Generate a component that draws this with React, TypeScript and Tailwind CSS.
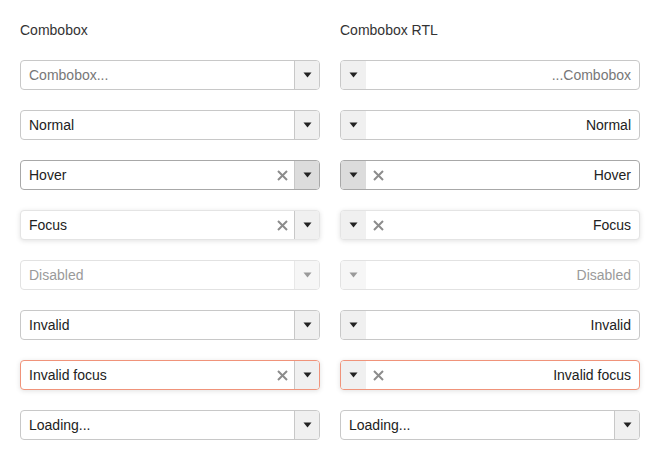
import React from "react";

type State = "placeholder" | "normal" | "hover" | "focus" | "disabled" | "invalid" | "invalidFocus" | "loading";

const rows: { state: State; label: string }[] = [
  { state: "placeholder", label: "Combobox..." },
  { state: "normal", label: "Normal" },
  { state: "hover", label: "Hover" },
  { state: "focus", label: "Focus" },
  { state: "disabled", label: "Disabled" },
  { state: "invalid", label: "Invalid" },
  { state: "invalidFocus", label: "Invalid focus" },
  { state: "loading", label: "Loading..." },
];

function Caret({ muted }: { muted?: boolean }) {
  return (
    <svg width="9" height="6" viewBox="0 0 9 6" className={muted ? "text-[#9a9a9a]" : "text-[#222]"}>
      <path d="M0.5 0.5 L8.5 0.5 L4.5 5.5 Z" fill="currentColor" />
    </svg>
  );
}

function Clear() {
  return (
    <svg width="11" height="11" viewBox="0 0 11 11" className="text-[#8c8c8c]">
      <path d="M1 1 L10 10 M10 1 L1 10" stroke="currentColor" strokeWidth="2" />
    </svg>
  );
}

const boxStyles: Record<State, string> = {
  placeholder: "border-[#c8c8c8]",
  normal: "border-[#c8c8c8]",
  hover: "border-[#a8a8a8]",
  focus: "border-[#e4e4e4] shadow-[0_1px_5px_rgba(0,0,0,0.12)]",
  disabled: "border-[#e2e2e2]",
  invalid: "border-[#c8c8c8]",
  invalidFocus: "border-[#f0937a] shadow-[0_1px_5px_rgba(0,0,0,0.12)]",
  loading: "border-[#c8c8c8]",
};

const textStyles: Record<State, string> = {
  placeholder: "text-[#777]",
  normal: "text-[#222]",
  hover: "text-[#222]",
  focus: "text-[#222]",
  disabled: "text-[#9a9a9a]",
  invalid: "text-[#222]",
  invalidFocus: "text-[#222]",
  loading: "text-[#222]",
};

function Combobox({ state, label, rtl }: { state: State; label: string; rtl?: boolean }) {
  const hasClear = state === "hover" || state === "focus" || state === "invalidFocus";
  const btnBg = state === "hover" ? "bg-[#dcdcdc]" : state === "disabled" ? "bg-[#f6f6f6]" : "bg-[#f0f0f0]";
  const isRtl = rtl && state !== "loading";

  if (isRtl) {
    return (
      <div className={`flex h-[30px] w-[300px] items-stretch overflow-hidden rounded border bg-white ${boxStyles[state]}`}>
        <div className={`flex w-[25px] items-center justify-center ${btnBg}`}>
          <Caret muted={state === "disabled"} />
        </div>
        {hasClear ? (
          <div className="flex w-[24px] items-center justify-center">
            <Clear />
          </div>
        ) : null}
        <div className={`flex flex-1 items-center justify-end pr-2 text-[14px] ${textStyles[state]}`}>
          {state === "placeholder" ? "...Combobox" : label}
        </div>
      </div>
    );
  }

  return (
    <div className={`flex h-[30px] w-[300px] items-stretch overflow-hidden rounded border bg-white ${boxStyles[state]}`}>
      <div className={`flex flex-1 items-center pl-2 text-[14px] ${textStyles[state]}`}>{label}</div>
      {hasClear ? (
        <div className="flex w-[24px] items-center justify-center">
          <Clear />
        </div>
      ) : null}
      <div className={`flex w-[25px] items-center justify-center border-l ${state === "disabled" ? "border-[#e8e8e8]" : "border-[#c8c8c8]"} ${btnBg}`}>
        <Caret muted={state === "disabled"} />
      </div>
    </div>
  );
}

export default function App() {
  return (
    <div className="flex min-h-[460px] gap-5 bg-white p-5 font-['Liberation_Sans',Arial,sans-serif] text-[#333]">
      {[false, true].map((rtl) => (
        <div key={String(rtl)} className="flex w-[300px] flex-col gap-5">
          <div className="flex h-5 items-center text-[14px]">{rtl ? "Combobox RTL" : "Combobox"}</div>
          {rows.map((r) => (
            <Combobox key={r.state} state={r.state} label={r.label} rtl={rtl} />
          ))}
        </div>
      ))}
    </div>
  );
}
